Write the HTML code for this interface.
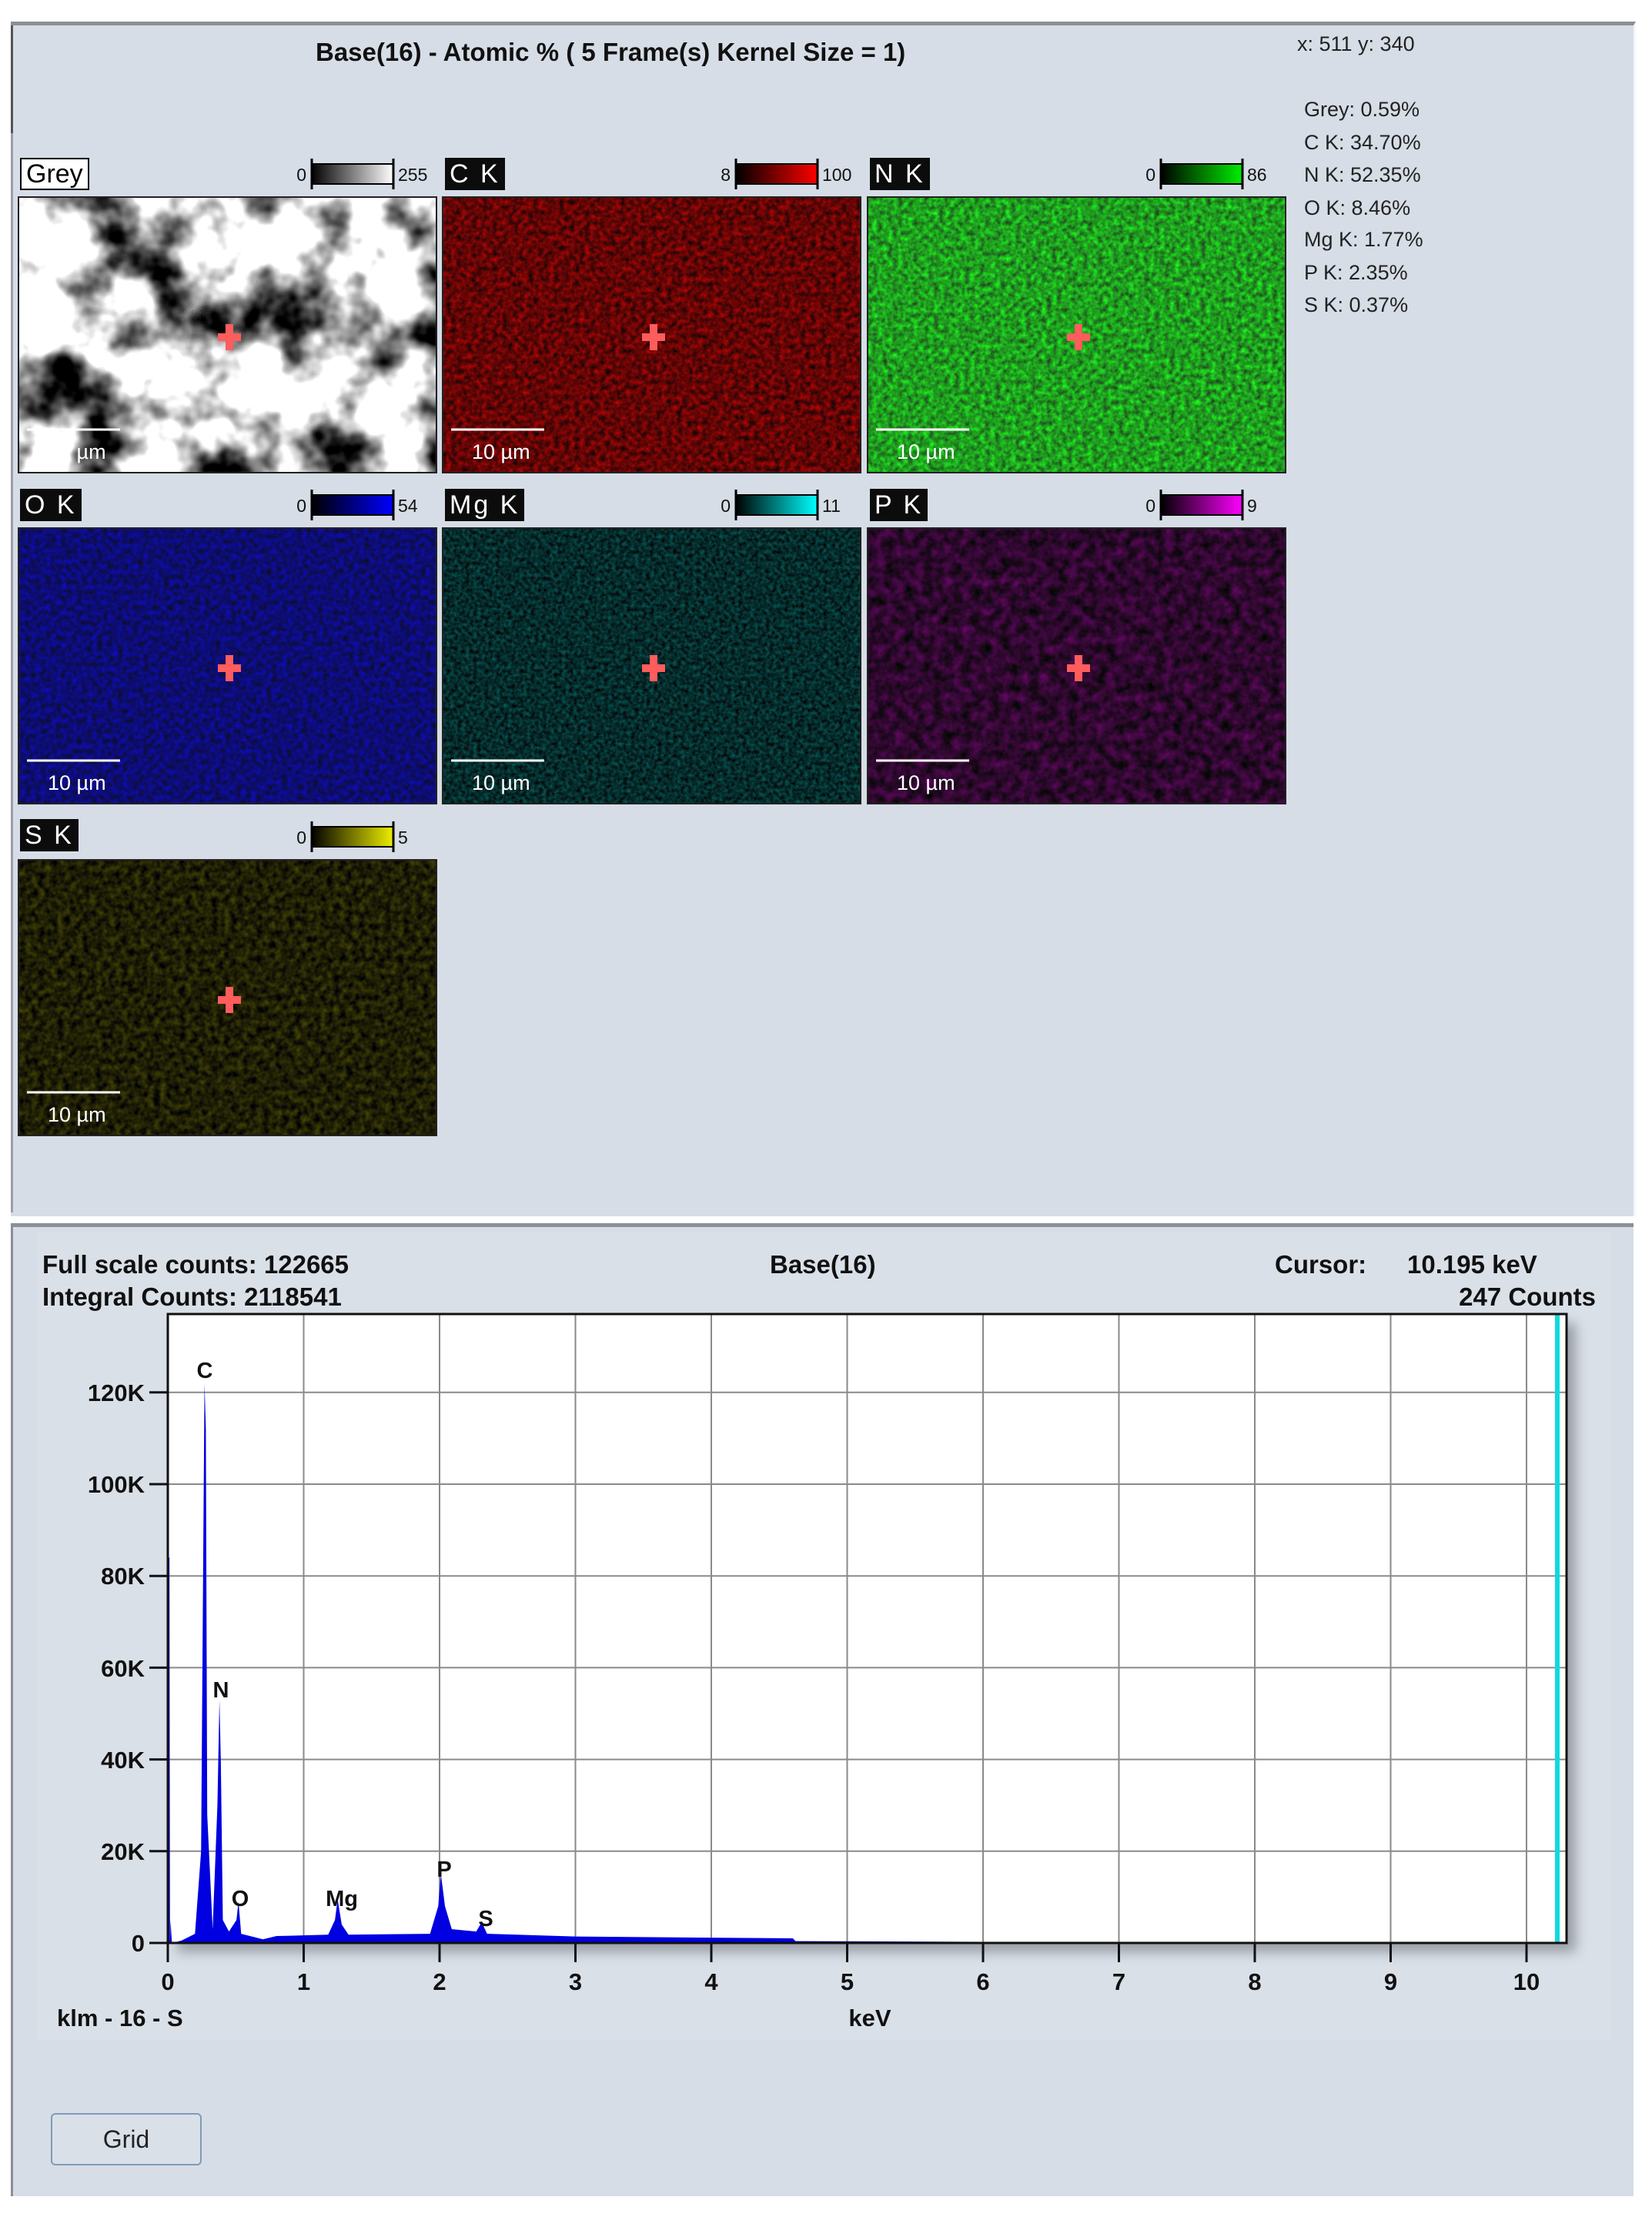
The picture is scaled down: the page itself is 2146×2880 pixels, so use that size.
<!DOCTYPE html>
<html><head><meta charset="utf-8">
<style>
html,body{margin:0;padding:0;background:#fff;}
body{width:2146px;height:2880px;position:relative;overflow:hidden;font-family:"Liberation Sans",Arial,sans-serif;}
.abs{position:absolute;}
.panel{position:absolute;background:#d6dde6;}
.lbl{position:absolute;height:42px;line-height:42px;font-size:34px;color:#fff;background:#0c0c0c;padding:0 6px;letter-spacing:3px;}
.lblw{color:#000;background:#fff;border:2px solid #000;letter-spacing:0;height:38px;line-height:38px;}
.info{position:absolute;font-size:27px;color:#222;line-height:30px;}
.b{font-weight:bold;font-size:33px;color:#111;position:absolute;line-height:36px;white-space:pre;}
</style></head><body>

<div class="panel" style="left:14px;top:28px;width:2108px;height:1547px;border-top:5px solid #8c8f94;border-right:3px solid #f4f6f8;"></div>
<div class="abs" style="left:14px;top:33px;width:3px;height:140px;background:#555;"></div>
<div class="abs" style="left:14px;top:173px;width:3px;height:1402px;background:#9aa0a8;"></div>
<div class="b" style="left:410px;top:50px;">Base(16) - Atomic % ( 5 Frame(s) Kernel Size = 1)</div>
<div class="info" style="left:1685px;top:42px;">x: 511 y: 340</div>
<div class="info" style="left:1694px;top:127px;">Grey: 0.59%</div>
<div class="info" style="left:1694px;top:170px;">C K: 34.70%</div>
<div class="info" style="left:1694px;top:212px;">N K: 52.35%</div>
<div class="info" style="left:1694px;top:255px;">O K: 8.46%</div>
<div class="info" style="left:1694px;top:296px;">Mg K: 1.77%</div>
<div class="info" style="left:1694px;top:339px;">P K: 2.35%</div>
<div class="info" style="left:1694px;top:381px;">S K: 0.37%</div>

<svg class="abs" style="left:0;top:0" width="2146" height="1560">
<defs>
<filter id="fG" x="0" y="0" width="100%" height="100%" color-interpolation-filters="sRGB"><feTurbulence type="fractalNoise" baseFrequency="0.011" numOctaves="4" seed="7"/><feColorMatrix values="4 0 0 0 -1.2  4 0 0 0 -1.2  4 0 0 0 -1.2  0 0 0 0 1"/></filter>
<filter id="fR" x="0" y="0" width="100%" height="100%" color-interpolation-filters="sRGB"><feTurbulence type="fractalNoise" baseFrequency="0.15" numOctaves="2" seed="2"/><feColorMatrix values="0.9 0 0 0 -0.06  0 0 0 0 0.02  0 0 0 0 0.02  0 0 0 0 1"/></filter>
<filter id="fN" x="0" y="0" width="100%" height="100%" color-interpolation-filters="sRGB"><feTurbulence type="fractalNoise" baseFrequency="0.15" numOctaves="2" seed="4"/><feColorMatrix values="0 0 0 0 0.12  1.0 0 0 0 0.12  0 0 0 0 0.12  0 0 0 0 1"/></filter>
<filter id="fO" x="0" y="0" width="100%" height="100%" color-interpolation-filters="sRGB"><feTurbulence type="fractalNoise" baseFrequency="0.15" numOctaves="2" seed="5"/><feColorMatrix values="0 0 0 0 0.05  0 0 0 0 0.05  0.8 0 0 0 0.05  0 0 0 0 1"/></filter>
<filter id="fM" x="0" y="0" width="100%" height="100%" color-interpolation-filters="sRGB"><feTurbulence type="fractalNoise" baseFrequency="0.2" numOctaves="2" seed="6"/><feColorMatrix values="0 0 0 0 0.02  0.5 0 0 0 -0.08  0.5 0 0 0 -0.08  0 0 0 0 1"/></filter>
<filter id="fP" x="0" y="0" width="100%" height="100%" color-interpolation-filters="sRGB"><feTurbulence type="fractalNoise" baseFrequency="0.08" numOctaves="3" seed="8"/><feColorMatrix values="0.5 0 0 0 -0.07  0 0 0 0 0.03  0.5 0 0 0 -0.07  0 0 0 0 1"/></filter>
<filter id="fS" x="0" y="0" width="100%" height="100%" color-interpolation-filters="sRGB"><feTurbulence type="fractalNoise" baseFrequency="0.12" numOctaves="2" seed="9"/><feColorMatrix values="0.4 0 0 0 -0.08  0.4 0 0 0 -0.08  0 0 0 0 0.02  0 0 0 0 1"/></filter>
<linearGradient id="gG"><stop offset="0" stop-color="#000"/><stop offset="1" stop-color="#fff"/></linearGradient>
<linearGradient id="gR"><stop offset="0" stop-color="#000"/><stop offset="1" stop-color="#f00"/></linearGradient>
<linearGradient id="gN"><stop offset="0" stop-color="#000"/><stop offset="1" stop-color="#0e0"/></linearGradient>
<linearGradient id="gO"><stop offset="0" stop-color="#000"/><stop offset="1" stop-color="#00f"/></linearGradient>
<linearGradient id="gM"><stop offset="0" stop-color="#000"/><stop offset="1" stop-color="#0ff"/></linearGradient>
<linearGradient id="gP"><stop offset="0" stop-color="#000"/><stop offset="1" stop-color="#f0f"/></linearGradient>
<linearGradient id="gS"><stop offset="0" stop-color="#000"/><stop offset="1" stop-color="#ee0"/></linearGradient>
<g id="cross"><rect x="-15" y="-5" width="30" height="10" fill="#ff5c5c"/><rect x="-5" y="-17" width="10" height="34" fill="#ff5c5c"/></g>
</defs>
<g>
<rect x="24" y="256" width="543" height="358" filter="url(#fG)"/>
<rect x="575" y="256" width="543" height="358" filter="url(#fR)"/>
<rect x="1127" y="256" width="543" height="358" filter="url(#fN)"/>
<rect x="24" y="686" width="543" height="358" filter="url(#fO)"/>
<rect x="575" y="686" width="543" height="358" filter="url(#fM)"/>
<rect x="1127" y="686" width="543" height="358" filter="url(#fP)"/>
<rect x="24" y="1117" width="543" height="358" filter="url(#fS)"/>
</g>
<g fill="none" stroke="#222" stroke-width="2">
<rect x="24" y="256" width="543" height="358"/><rect x="575" y="256" width="543" height="358"/><rect x="1127" y="256" width="543" height="358"/>
<rect x="24" y="686" width="543" height="358"/><rect x="575" y="686" width="543" height="358"/><rect x="1127" y="686" width="543" height="358"/>
<rect x="24" y="1117" width="543" height="358"/>
</g>
<g stroke="#fff" stroke-width="3">
<line x1="35" y1="558" x2="156" y2="558"/><line x1="586" y1="558" x2="707" y2="558"/><line x1="1138" y1="558" x2="1259" y2="558"/>
<line x1="35" y1="988" x2="156" y2="988"/><line x1="586" y1="988" x2="707" y2="988"/><line x1="1138" y1="988" x2="1259" y2="988"/>
<line x1="35" y1="1419" x2="156" y2="1419"/>
</g>
<g fill="#fff" font-family="Liberation Sans, Arial, sans-serif" font-size="27">
<text x="62" y="596">10 µm</text><text x="613" y="596">10 µm</text><text x="1165" y="596">10 µm</text>
<text x="62" y="1026">10 µm</text><text x="613" y="1026">10 µm</text><text x="1165" y="1026">10 µm</text>
<text x="62" y="1457">10 µm</text>
</g>
<use href="#cross" x="298" y="438"/><use href="#cross" x="849" y="438"/><use href="#cross" x="1401" y="438"/>
<use href="#cross" x="298" y="868"/><use href="#cross" x="849" y="868"/><use href="#cross" x="1401" y="868"/>
<use href="#cross" x="298" y="1299"/>
<g font-family="Liberation Sans, Arial, sans-serif" font-size="23" fill="#111">
<g transform="translate(24,0)"><rect x="381" y="213" width="106" height="26" fill="url(#gG)" stroke="#000" stroke-width="2"/><line x1="381" y1="206" x2="381" y2="246" stroke="#000" stroke-width="3"/><line x1="487" y1="206" x2="487" y2="246" stroke="#000" stroke-width="3"/><text x="374" y="235" text-anchor="end">0</text><text x="493" y="235">255</text></g>
<g transform="translate(575,0)"><rect x="381" y="213" width="106" height="26" fill="url(#gR)" stroke="#000" stroke-width="2"/><line x1="381" y1="206" x2="381" y2="246" stroke="#000" stroke-width="3"/><line x1="487" y1="206" x2="487" y2="246" stroke="#000" stroke-width="3"/><text x="374" y="235" text-anchor="end">8</text><text x="493" y="235">100</text></g>
<g transform="translate(1127,0)"><rect x="381" y="213" width="106" height="26" fill="url(#gN)" stroke="#000" stroke-width="2"/><line x1="381" y1="206" x2="381" y2="246" stroke="#000" stroke-width="3"/><line x1="487" y1="206" x2="487" y2="246" stroke="#000" stroke-width="3"/><text x="374" y="235" text-anchor="end">0</text><text x="493" y="235">86</text></g>
<g transform="translate(24,430)"><rect x="381" y="213" width="106" height="26" fill="url(#gO)" stroke="#000" stroke-width="2"/><line x1="381" y1="206" x2="381" y2="246" stroke="#000" stroke-width="3"/><line x1="487" y1="206" x2="487" y2="246" stroke="#000" stroke-width="3"/><text x="374" y="235" text-anchor="end">0</text><text x="493" y="235">54</text></g>
<g transform="translate(575,430)"><rect x="381" y="213" width="106" height="26" fill="url(#gM)" stroke="#000" stroke-width="2"/><line x1="381" y1="206" x2="381" y2="246" stroke="#000" stroke-width="3"/><line x1="487" y1="206" x2="487" y2="246" stroke="#000" stroke-width="3"/><text x="374" y="235" text-anchor="end">0</text><text x="493" y="235">11</text></g>
<g transform="translate(1127,430)"><rect x="381" y="213" width="106" height="26" fill="url(#gP)" stroke="#000" stroke-width="2"/><line x1="381" y1="206" x2="381" y2="246" stroke="#000" stroke-width="3"/><line x1="487" y1="206" x2="487" y2="246" stroke="#000" stroke-width="3"/><text x="374" y="235" text-anchor="end">0</text><text x="493" y="235">9</text></g>
<g transform="translate(24,861)"><rect x="381" y="213" width="106" height="26" fill="url(#gS)" stroke="#000" stroke-width="2"/><line x1="381" y1="206" x2="381" y2="246" stroke="#000" stroke-width="3"/><line x1="487" y1="206" x2="487" y2="246" stroke="#000" stroke-width="3"/><text x="374" y="235" text-anchor="end">0</text><text x="493" y="235">5</text></g>
</g>
</svg>
<div class="lbl lblw" style="left:26px;top:205px;">Grey</div>
<div class="lbl" style="left:578px;top:205px;">C K</div>
<div class="lbl" style="left:1130px;top:205px;">N K</div>
<div class="lbl" style="left:26px;top:635px;">O K</div>
<div class="lbl" style="left:578px;top:635px;">Mg K</div>
<div class="lbl" style="left:1130px;top:635px;">P K</div>
<div class="lbl" style="left:26px;top:1064px;">S K</div>

<div class="panel" style="left:14px;top:1589px;width:2105px;height:1259px;border-top:5px solid #8c8f94;border-left:3px solid #8c8f94;"></div>
<div class="abs" style="left:48px;top:1600px;width:2045px;height:1050px;background:#dae0e8;"></div>
<div class="b" style="left:55px;top:1625px;">Full scale counts: 122665</div>
<div class="b" style="left:55px;top:1667px;">Integral Counts: 2118541</div>
<div class="b" style="left:1000px;top:1625px;">Base(16)</div>
<div class="b" style="left:1656px;top:1625px;">Cursor:</div>
<div class="b" style="left:1828px;top:1625px;">10.195 keV</div>
<div class="b" style="left:1840px;top:1667px;width:233px;text-align:right;">247 Counts</div>

<svg class="abs" style="left:0;top:1600px" width="2146" height="1100" viewBox="0 1600 2146 1100">
<defs><filter id="sh"><feGaussianBlur stdDeviation="8"/></filter></defs>
<rect x="230" y="1719" width="1817" height="817" fill="#6d7278" opacity="0.6" filter="url(#sh)"/>
<rect x="218" y="1707" width="1817" height="817" fill="#fff"/>
<g stroke="#8a8a8a" stroke-width="2">
<line x1="394.5" y1="1707" x2="394.5" y2="2524"/><line x1="571" y1="1707" x2="571" y2="2524"/><line x1="747.5" y1="1707" x2="747.5" y2="2524"/><line x1="924" y1="1707" x2="924" y2="2524"/><line x1="1100.5" y1="1707" x2="1100.5" y2="2524"/><line x1="1277" y1="1707" x2="1277" y2="2524"/><line x1="1453.5" y1="1707" x2="1453.5" y2="2524"/><line x1="1630" y1="1707" x2="1630" y2="2524"/><line x1="1806.5" y1="1707" x2="1806.5" y2="2524"/><line x1="1983" y1="1707" x2="1983" y2="2524"/>
<line x1="218" y1="2404.8" x2="2035" y2="2404.8"/><line x1="218" y1="2285.6" x2="2035" y2="2285.6"/><line x1="218" y1="2166.4" x2="2035" y2="2166.4"/><line x1="218" y1="2047.2" x2="2035" y2="2047.2"/><line x1="218" y1="1928" x2="2035" y2="1928"/><line x1="218" y1="1808.8" x2="2035" y2="1808.8"/>
</g>
<g transform="translate(218,2524) scale(176.5,-0.00596)">
<polygon fill="#0000e0" points="0,0 0.004,84000 0.012,84000 0.016,0 0.02,5000 0.03,0 0.1,500 0.2,2000 0.245,20000 0.262,90000 0.27,122000 0.28,112000 0.29,28000 0.33,3000 0.365,30000 0.38,53000 0.39,40000 0.405,5000 0.45,2500 0.505,5000 0.52,9000 0.54,2000 0.7,800 0.8,1500 1.18,1800 1.23,5000 1.25,9500 1.28,4000 1.33,1800 1.93,2000 1.99,8000 2.01,15000 2.04,8000 2.09,3000 2.27,2500 2.31,4500 2.35,2000 3,1400 4.6,1000 4.62,400 6.5,200 6.55,0"/>
</g>
<rect x="2020" y="1707" width="6" height="817" fill="#10d8e0"/>
<rect x="218" y="1707" width="1817" height="817" fill="none" stroke="#111" stroke-width="3"/>
<g stroke="#111" stroke-width="3">
<line x1="194" y1="2524" x2="218" y2="2524"/><line x1="194" y1="2404.8" x2="218" y2="2404.8"/><line x1="194" y1="2285.6" x2="218" y2="2285.6"/><line x1="194" y1="2166.4" x2="218" y2="2166.4"/><line x1="194" y1="2047.2" x2="218" y2="2047.2"/><line x1="194" y1="1928" x2="218" y2="1928"/><line x1="194" y1="1808.8" x2="218" y2="1808.8"/>
<line x1="218" y1="2524" x2="218" y2="2549"/><line x1="394.5" y1="2524" x2="394.5" y2="2549"/><line x1="571" y1="2524" x2="571" y2="2549"/><line x1="747.5" y1="2524" x2="747.5" y2="2549"/><line x1="924" y1="2524" x2="924" y2="2549"/><line x1="1100.5" y1="2524" x2="1100.5" y2="2549"/><line x1="1277" y1="2524" x2="1277" y2="2549"/><line x1="1453.5" y1="2524" x2="1453.5" y2="2549"/><line x1="1630" y1="2524" x2="1630" y2="2549"/><line x1="1806.5" y1="2524" x2="1806.5" y2="2549"/><line x1="1983" y1="2524" x2="1983" y2="2549"/>
</g>
<g font-family="Liberation Sans, Arial, sans-serif" font-weight="bold" font-size="31" fill="#111">
<g text-anchor="end"><text x="188" y="2535">0</text><text x="188" y="2416">20K</text><text x="188" y="2297">40K</text><text x="188" y="2178">60K</text><text x="188" y="2058">80K</text><text x="188" y="1939">100K</text><text x="188" y="1820">120K</text></g>
<g text-anchor="middle"><text x="218" y="2585">0</text><text x="394.5" y="2585">1</text><text x="571" y="2585">2</text><text x="747.5" y="2585">3</text><text x="924" y="2585">4</text><text x="1100.5" y="2585">5</text><text x="1277" y="2585">6</text><text x="1453.5" y="2585">7</text><text x="1630" y="2585">8</text><text x="1806.5" y="2585">9</text><text x="1983" y="2585">10</text>
<text x="1130" y="2632">keV</text></g>
<text x="74" y="2632">klm - 16 - S</text>
<g font-size="29" text-anchor="middle"><text x="266" y="1790">C</text><text x="287" y="2205">N</text><text x="312" y="2476">O</text><text x="444" y="2476">Mg</text><text x="577" y="2438">P</text><text x="631" y="2502">S</text></g>
</g>
</svg>
<div class="abs" style="left:66px;top:2745px;width:192px;height:64px;border:2px solid #7f9bb8;border-radius:6px;background:#d9e0e8;text-align:center;line-height:64px;font-size:32px;color:#222;">Grid</div>
</body></html>
